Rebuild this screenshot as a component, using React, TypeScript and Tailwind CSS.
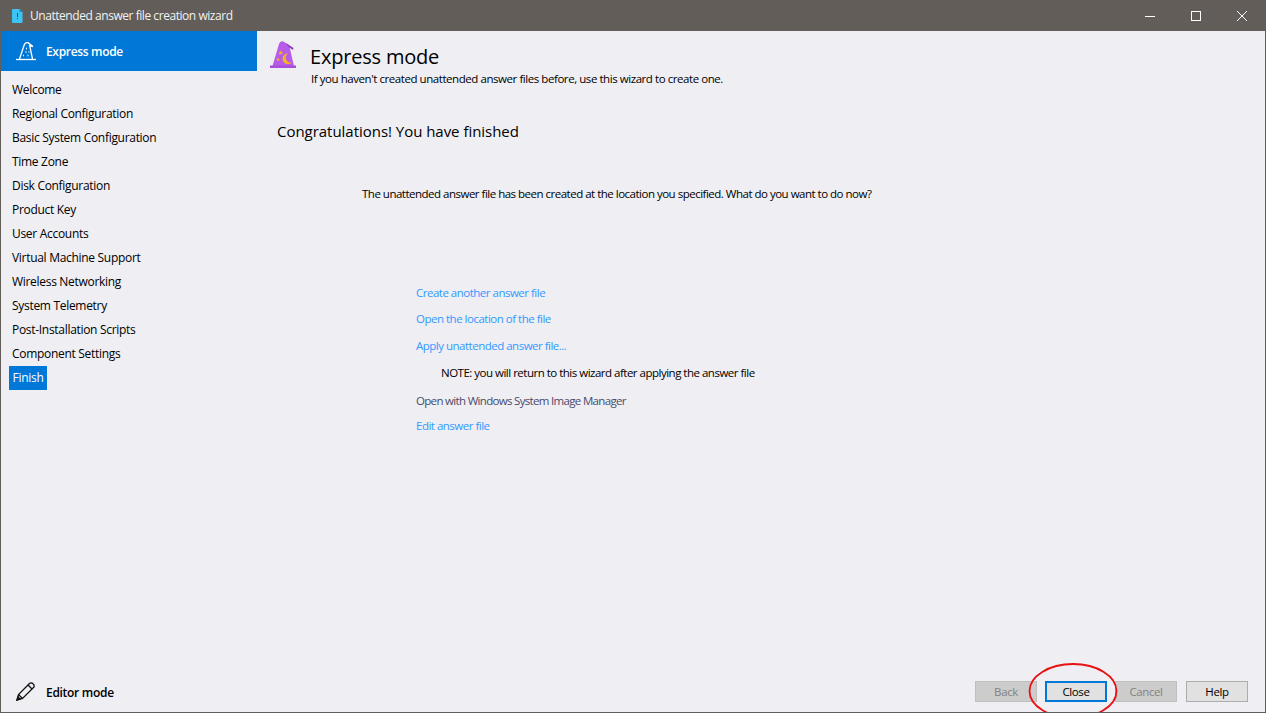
import React from "react"

const NAV_ITEMS = [
  "Welcome",
  "Regional Configuration",
  "Basic System Configuration",
  "Time Zone",
  "Disk Configuration",
  "Product Key",
  "User Accounts",
  "Virtual Machine Support",
  "Wireless Networking",
  "System Telemetry",
  "Post-Installation Scripts",
  "Component Settings",
]

function TitleBar() {
  return (
    <div className="flex h-[30px] shrink-0 items-center bg-[#625d58] text-white">
      <svg width="11" height="14" viewBox="0 0 11 14" className="ml-[11px]">
        <path d="M1 0h6.500L10.500 3v10a1 1 0 0 1-1 1H1a1 1 0 0 1-1-1V1a1 1 0 0 1 1-1z" fill="#3cc4f4" />
        <path d="M7.500 0l3 3h-3z" fill="#1a86c8" />
        <rect x="5" y="4" width="1" height="4" fill="#14558a" />
        <rect x="5" y="9" width="1" height="1" fill="#14558a" />
      </svg>
      <span className="ml-[7px] text-[12px] tracking-[-0.45px] text-[#f2f2f2]">Unattended answer file creation wizard</span>
      <div className="ml-auto flex items-center">
        <div className="flex h-[30px] w-[46px] items-center justify-center">
          <div className="h-px w-[10px] bg-white" />
        </div>
        <div className="flex h-[30px] w-[46px] items-center justify-center">
          <div className="h-[10px] w-[10px] border border-white" />
        </div>
        <div className="flex h-[30px] w-[46px] items-center justify-center">
          <svg width="10" height="10" viewBox="0 0 10 10">
            <path d="M0 0l10 10M10 0L0 10" stroke="#fff" strokeWidth="1" />
          </svg>
        </div>
      </div>
    </div>
  )
}

function Sidebar() {
  return (
    <div className="flex w-[256px] shrink-0 flex-col">
      <div className="flex h-[40px] items-center bg-[#0078d7] pb-px pl-[14px] text-white">
        <svg width="22" height="20" viewBox="0 0 22 20" fill="none" stroke="#fff" strokeWidth="1.300">
          <path d="M1 18.500h20" />
          <path d="M4.500 18L9 4.500C9.800 2 11 1.300 13 1.700l5 3.800-3.300-.9L17.500 18" />
          <path d="M8 14.500h1M10.500 11h1M12.500 14.500h1M11 7.500h1M13.500 11h.8" strokeWidth="1.300" />
        </svg>
        <span className="ml-[9px] mt-[2px] text-[12px] font-semibold tracking-[-0.33px]">Express mode</span>
      </div>
      <nav className="flex flex-1 flex-col pt-[7px] text-[12px] tracking-[-0.3px] text-black">
        {NAV_ITEMS.map((item) => (
          <div key={item} className="flex h-[24px] items-center pl-[11px]">
            {item}
          </div>
        ))}
        <div className="ml-[8px] flex h-[24px] w-[38px] items-center justify-center bg-[#0078d7] text-white">Finish</div>
      </nav>
      <div className="flex h-[42px] items-center pl-[14px]">
        <svg width="21" height="21" viewBox="0 0 21 21" fill="none" stroke="#111" strokeWidth="1.300">
          <path d="M2 19l1.500-5.500L14.500 2.500a2.200 2.200 0 0 1 3.200 0l.8.8a2.200 2.200 0 0 1 0 3.200L7.500 17.500z" />
          <path d="M3.500 13.500l4 4M13 4l4 4" />
          <path d="M2 19l1-3 2 2z" fill="#111" />
        </svg>
        <span className="ml-[10px] mt-[4px] text-[12px] font-semibold tracking-[-0.3px] text-black">Editor mode</span>
      </div>
    </div>
  )
}

function WizardLink({ children, className }: { children: React.ReactNode; className?: string }) {
  return <div className={`text-[#3399ff] ${className ?? ""}`}>{children}</div>
}

function Content() {
  return (
    <div className="flex min-w-0 flex-1 flex-col">
      <div className="flex pl-[12px] pt-[9px]">
        <svg width="30" height="30" viewBox="0 0 30 30">
          <path d="M3.500 26L10 4C10.800 2 12 1 14 1.200L19 4.500L20.500 7L25 26z" fill="#b65ce8" />
          <path d="M17 3L24.500 8L24 10L19.500 7z" fill="#8c3cc0" />
          <path d="M1 25.500h26v2.500H1z" fill="#a84fdc" />
          <path d="M11.700 10.500l.7 1.500 1.600.2-1.200 1.100.3 1.600-1.400-.8-1.400.8.3-1.600-1.200-1.100 1.600-.2z" fill="#f5b324" />
          <path d="M9 17.500l.6 1.200 1.300.2-1 .9.300 1.300-1.200-.7-1.200.7.300-1.300-1-.9 1.300-.2z" fill="#f5b324" />
          <path d="M19.500 13.500A5.300 5.300 0 1 0 23 22A4.600 4.600 0 0 1 19.500 13.500z" fill="#f5b324" />
        </svg>
        <div className="ml-[11px]">
          <div className="h-[26px] pt-[4px] text-[20px] leading-[26px] tracking-[-0.2px] text-black">Express mode</div>
          <div className="ml-px mt-[5px] text-[11.5px] leading-[16px] tracking-[-0.44px] text-black">
            If you haven't created unattended answer files before, use this wizard to create one.
          </div>
        </div>
      </div>
      <div className="ml-[20px] mt-[34px] text-[15px] leading-[20px] tracking-[-0.03px] text-black">
        Congratulations! You have finished
      </div>
      <div className="ml-[105px] mt-[45px] text-[11.5px] leading-[16px] tracking-[-0.5px] text-black">
        The unattended answer file has been created at the location you specified. What do you want to do now?
      </div>
      <div className="ml-[159px] mt-[83px] flex flex-col text-[11.5px] leading-[16px] tracking-[-0.5px]">
        <WizardLink>Create another answer file</WizardLink>
        <WizardLink className="mt-[10px]">Open the location of the file</WizardLink>
        <WizardLink className="mt-[11px]">Apply unattended answer file...</WizardLink>
        <div className="ml-[25px] mt-[11px] text-black">NOTE: you will return to this wizard after applying the answer file</div>
        <div className="mt-[12px] tracking-[-0.68px] text-[#4a4a6a]">Open with Windows System Image Manager</div>
        <WizardLink className="mt-[9px]">Edit answer file</WizardLink>
      </div>
      <div className="mt-auto flex justify-end pb-[10px] pr-[17px] text-[11.5px] tracking-[-0.4px]">
        <div className="flex h-[21px] w-[62px] items-center justify-center border border-[#bfbfbf] bg-[#cccccc] text-[#838383]">Back</div>
        <div className="ml-[8px] flex h-[21px] w-[62px] items-center justify-center border-2 border-[#0078d7] bg-[#e1e1e1] text-black">Close</div>
        <div className="ml-[8px] flex h-[21px] w-[62px] items-center justify-center border border-[#bfbfbf] bg-[#cccccc] text-[#838383]">Cancel</div>
        <div className="ml-[9px] flex h-[21px] w-[62px] items-center justify-center border border-[#adadad] bg-[#e1e1e1] text-black">Help</div>
      </div>
    </div>
  )
}

export default function App() {
  return (
    <div className="relative flex h-[713px] w-[1266px] flex-col overflow-hidden border border-[#625d58] bg-[#eeeef3] font-['Open_Sans','Noto_Sans',sans-serif]">
      <TitleBar />
      <div className="flex min-h-0 flex-1">
        <Sidebar />
        <Content />
      </div>
      <svg width="92" height="56" viewBox="0 0 92 56" fill="none" className="absolute left-[1027px] top-[661px]">
        <ellipse cx="45" cy="29" rx="43.500" ry="27" stroke="#e81010" strokeWidth="1.800" />
      </svg>
    </div>
  )
}
